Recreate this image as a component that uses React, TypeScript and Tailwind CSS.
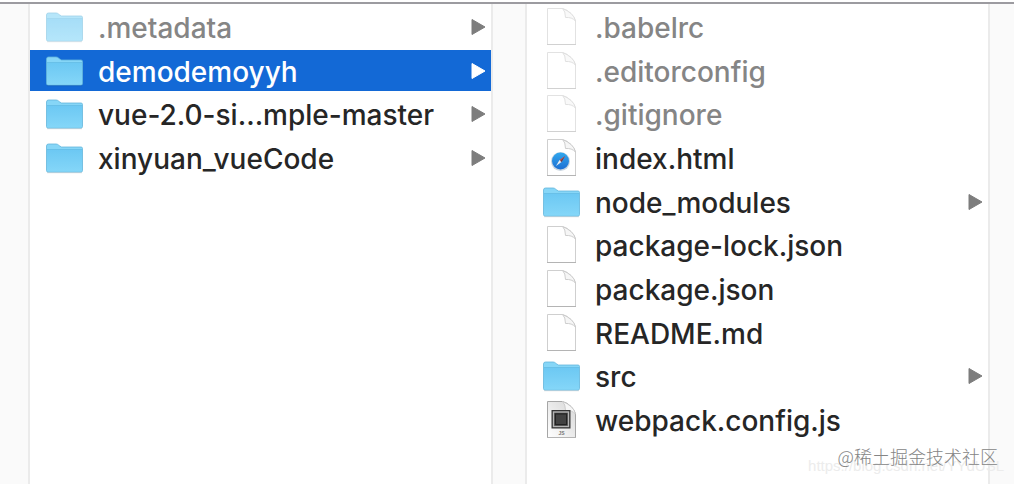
import { useState } from "react";
import clsx from "clsx";

type Kind = "folder" | "file" | "html" | "js";

interface Entry {
  name: string;
  kind: Kind;
  label?: string;
}

const projects: Entry[] = [
  { name: ".metadata", kind: "folder" },
  { name: "demodemoyyh", kind: "folder" },
  { name: "vue-2.0-simple-master", kind: "folder", label: "vue-2.0-si...mple-master" },
  { name: "xinyuan_vueCode", kind: "folder" },
];

const files: Entry[] = [
  { name: ".babelrc", kind: "file" },
  { name: ".editorconfig", kind: "file" },
  { name: ".gitignore", kind: "file" },
  { name: "index.html", kind: "html" },
  { name: "node_modules", kind: "folder" },
  { name: "package-lock.json", kind: "file" },
  { name: "package.json", kind: "file" },
  { name: "README.md", kind: "file" },
  { name: "src", kind: "folder" },
  { name: "webpack.config.js", kind: "js" },
];

function FolderIcon() {
  return (
    <svg viewBox="0 0 37 38" className="w-[37px] h-[38px]" aria-hidden="true">
      <defs>
        <linearGradient id="folder" x1="0" y1="0" x2="0" y2="1">
          <stop offset="0" stopColor="#6cc8f3" />
          <stop offset="1" stopColor="#84d6f8" />
        </linearGradient>
      </defs>
      <path d="M1 34.5h35" stroke="#000" strokeOpacity=".12" strokeWidth="1.5" />
      <path d="M.5 8Q.5 6 2.5 6H10q1.5 0 2.5 1t3 2H35q1.5 0 1.5 1.5V32.5q0 1.5-1.5 1.5H2Q.5 34 .5 32.5Z" fill="#86d6f7" stroke="#62b5dc" strokeWidth=".8" />
      <path d="M1 11.5h35V32.5q0 1-1 1H2q-1 0-1-1Z" fill="url(#folder)" />
      <path d="M1 11.5h35" stroke="#62b9e3" strokeWidth=".7" />
    </svg>
  );
}

function FileIcon({ kind }: { kind: Kind }) {
  return (
    <svg viewBox="0 0 37 38" className="w-[37px] h-[38px]" aria-hidden="true">
      <defs>
        <linearGradient id="sheet" x1="0" y1="1" x2="1" y2="0">
          <stop offset="0" stopColor="#fff" />
          <stop offset="1" stopColor="#d6d6d6" />
        </linearGradient>
        <linearGradient id="compass" x1="0" y1="0" x2="0" y2="1">
          <stop offset="0" stopColor="#31a8ee" />
          <stop offset="1" stopColor="#1d6ed2" />
        </linearGradient>
      </defs>
      <path
        d="M4.5 1.5H19.5Q24 2.5 28 6.5T32.5 14V37.5H4.5Z"
        fill={kind === "js" ? "url(#sheet)" : "#fff"}
        stroke={kind === "js" ? "#a6a6a6" : "#cfcfcf"}
      />
      <path d="M4 37.5H33" stroke="#b4b4b4" />
      <path d="M19.5 1.5Q22.5 4 22.5 10.5Q29 10 32.5 14Q31.5 9.5 28 6.5T19.5 1.5Z" fill="#f6f6f6" stroke="#c8c8c8" strokeWidth=".9" />
      {kind === "html" && (
        <>
          <circle cx="17.5" cy="23.5" r="9.5" fill="#c9d5e0" />
          <circle cx="17.5" cy="23" r="8.5" fill="url(#compass)" />
          <path d="M22 18 18.5 24 16.5 22Z" fill="#d94b3d" />
          <path d="M13 28 16.5 22l2 2Z" fill="#e9eef3" />
          <path d="M22 18 18.5 24 17.5 23Z" fill="#5d4350" />
        </>
      )}
      {kind === "js" && (
        <>
          <rect x="8.5" y="10" width="19" height="18.5" fill="#343434" />
          <rect x="10.5" y="12" width="15" height="14.5" fill="#3c3c3c" stroke="#b5b5b5" strokeWidth="1.4" />
          <rect x="12.5" y="14" width="11" height="10.5" fill="#424242" stroke="#222" />
          <text x="18.5" y="34.5" textAnchor="middle" fontSize="5" fontWeight="700" fontFamily="Liberation Sans" fill="#777">JS</text>
        </>
      )}
    </svg>
  );
}

function Column({ title, entries, initial }: { title: string; entries: Entry[]; initial?: string }) {
  const [selected, setSelected] = useState(initial);

  return (
    <section aria-label={title} className="flex-1 min-w-0 bg-white pt-[2px]">
      <ul className="grid grid-rows-10 h-[437px]">
        {entries.map((entry) => {
          const active = entry.name === selected;
          const hidden = entry.name.startsWith(".");
          return (
            <li key={entry.name} className="min-h-0 pb-[2px]">
              <button
                type="button"
                onClick={() => setSelected(entry.name)}
                className={clsx(
                  "flex items-center w-full h-full pl-4 pr-[5px] gap-[15px] text-left text-[28px] leading-10 font-medium",
                  active ? "bg-[#1369d6] text-white" : hidden ? "text-[#858585]" : "text-[#262626]"
                )}
              >
                <span className={clsx("shrink-0 pb-[2px]", hidden && "opacity-60")}>
                  {entry.kind === "folder" ? <FolderIcon /> : <FileIcon kind={entry.kind} />}
                </span>
                <span className="flex-1 min-w-0 pt-[2px] whitespace-nowrap">{entry.label ?? entry.name}</span>
                {entry.kind === "folder" && (
                  <svg viewBox="0 0 15 18" className={clsx("w-[15px] h-[18px] shrink-0", active ? "text-white" : "text-[#7d7d7d]")} aria-hidden="true">
                    <path d="M1 1.5 14 9 1 16.5Z" fill="currentColor" stroke="currentColor" strokeLinejoin="round" />
                  </svg>
                )}
              </button>
            </li>
          );
        })}
      </ul>
    </section>
  );
}

export default function App() {
  return (
    <div className="relative min-h-screen flex flex-col overflow-hidden bg-white pt-[2px] font-['Inter',sans-serif]">
      <div className="h-[2px] bg-[#9c9ba0]" />
      <main className="flex flex-1">
        <div className="w-[30px] shrink-0 bg-[#fafafa] border-r-2 border-[#ebebeb]" />
        <Column title="Projects" entries={projects} initial="demodemoyyh" />
        <div className="w-9 shrink-0 bg-[#fafafa] border-x-2 border-[#ebebeb]" />
        <Column title="Files" entries={files} />
        <div className="w-[26px] shrink-0 bg-[#fafafa] border-l-2 border-[#ebebeb]" />
      </main>

      {/* watermarks */}
      <p className="absolute right-[10px] bottom-2 text-[15px] leading-5 text-[#ececec] font-['Liberation_Sans',sans-serif]">
        https://blog.csdn.net/YYdUSL
      </p>
      <p className="absolute right-4 bottom-[18px] text-[18px] leading-5 font-light text-[#858585] font-['Noto_Sans_CJK_SC',sans-serif]">
        @稀土掘金技术社区
      </p>
    </div>
  );
}
